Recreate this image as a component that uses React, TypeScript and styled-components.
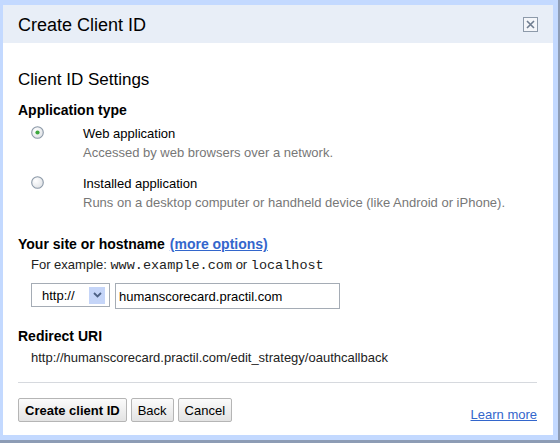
import React from "react";
import styled, { createGlobalStyle } from "styled-components";

const GlobalStyle = createGlobalStyle`
  html, body {
    margin: 0;
    padding: 0;
    background: #ffffff;
  }
  body {
    font-family: "Liberation Sans", Arial, sans-serif;
    color: #000;
  }
`;

const Frame = styled.div`
  width: 560px;
  height: 443px;
  box-sizing: border-box;
  background: #c3d9ff;
  padding: 5px 5px 5px 3px;
  border-right: 2px solid #8d9cb5;
  border-bottom: 3px solid #8d9cb5;
  display: flex;
  flex-direction: column;
`;

const Header = styled.div`
  height: 38px;
  flex: none;
  box-sizing: border-box;
  background: #e8eef7;
  padding: 0 15px;
  display: flex;
  justify-content: space-between;
  align-items: flex-start;
`;

const Title = styled.h1`
  margin: 10px 0 0;
  font-size: 18px;
  line-height: 21px;
  font-weight: normal;
`;

const CloseBox = styled.button`
  margin-top: 12px;
  width: 15px;
  height: 15px;
  padding: 0;
  border: 1px solid #8d9aaa;
  background: #f4f6fa;
  display: flex;
  align-items: center;
  justify-content: center;
  cursor: pointer;
`;

const Body = styled.div`
  flex: 1;
  background: #ffffff;
  padding: 0 16px 0 15px;
  display: flex;
  flex-direction: column;
`;

const SectionTitle = styled.h2`
  margin: 27px 0 0;
  font-size: 17px;
  line-height: 19px;
  font-weight: normal;
`;

const Label = styled.div<{ $gap: number }>`
  margin-top: ${(p) => p.$gap}px;
  font-size: 14px;
  line-height: 16px;
  font-weight: bold;
`;

const MoreLink = styled.a`
  color: #3366cc;
  text-decoration: underline;
  margin-left: 5px;
  cursor: pointer;
`;

const OptionRow = styled.label<{ $gap: number }>`
  margin-top: ${(p) => p.$gap}px;
  padding-left: 13px;
  display: grid;
  grid-template-columns: 13px 1fr;
  column-gap: 39px;
  font-size: 13px;
  line-height: 19px;
`;

const RadioMark = styled.span`
  margin-top: 1px;
  width: 13px;
  height: 13px;
  display: block;
`;

const OptionName = styled.div`
  color: #000;
`;

const OptionDesc = styled.div`
  color: #777777;
`;

const Hint = styled.div<{ $gap: number }>`
  margin-top: ${(p) => p.$gap}px;
  padding-left: 13px;
  font-size: 13px;
  line-height: 19px;
  color: #222;
`;

const Mono = styled.code`
  font-family: "Liberation Mono", "Courier New", monospace;
  font-size: 13.5px;
`;

const HostRow = styled.div`
  margin-top: 8px;
  padding-left: 13px;
  display: flex;
  align-items: flex-start;
  gap: 5px;
`;

const SchemeSelect = styled.div`
  width: 79px;
  height: 24px;
  box-sizing: border-box;
  border: 1px solid #a5acb5;
  background: #fff;
  display: flex;
  align-items: center;
  justify-content: space-between;
  padding: 0 4px 0 10px;
  font-size: 13px;
`;

const DropButton = styled.span`
  width: 16px;
  height: 17px;
  background: #c5d5f8;
  display: flex;
  align-items: center;
  justify-content: center;
`;

const HostInput = styled.input`
  width: 225px;
  height: 26px;
  box-sizing: border-box;
  border: 1px solid #a5acb5;
  padding: 0 3px;
  font-family: "Liberation Sans", Arial, sans-serif;
  font-size: 13px;
  color: #000;
  outline: none;
`;

const Rule = styled.hr`
  margin: 15px 0 0;
  border: 0;
  border-top: 1px solid #d6d9de;
`;

const Footer = styled.div`
  margin-top: 15px;
  display: flex;
  align-items: flex-end;
  justify-content: space-between;
`;

const ButtonGroup = styled.div`
  display: flex;
  gap: 4px;
`;

const Button = styled.button<{ $primary?: boolean }>`
  height: 24px;
  padding: 0 6px;
  border: 1px solid #b5b5b5;
  border-radius: 2px;
  background: linear-gradient(#fbfbfb, #e3e3e3);
  font-family: "Liberation Sans", Arial, sans-serif;
  font-size: 13px;
  font-weight: ${(p) => (p.$primary ? "bold" : "normal")};
  color: #000;
  cursor: pointer;
`;

const LearnMore = styled.a`
  font-size: 13px;
  line-height: 16px;
  color: #3366cc;
  text-decoration: underline;
  margin-bottom: -1px;
  cursor: pointer;
`;

const Radio = ({ checked }: { checked?: boolean }) => (
  <RadioMark>
    <svg width="13" height="13" viewBox="0 0 13 13">
      <defs>
        <radialGradient id="rg" cx="0.35" cy="0.35" r="0.8">
          <stop offset="0" stopColor="#ffffff" />
          <stop offset="1" stopColor="#dcdfe3" />
        </radialGradient>
      </defs>
      <circle cx="6.5" cy="6.5" r="5.8" fill="url(#rg)" stroke="#8c99a8" strokeWidth="1.1" />
      {checked && <circle cx="6.5" cy="6.5" r="2.1" fill="#3ea83e" />}
    </svg>
  </RadioMark>
);

const App = () => {
  return (
    <>
      <GlobalStyle />
      <Frame>
        <Header>
          <Title>Create Client ID</Title>
          <CloseBox aria-label="Close">
            <svg width="9" height="9" viewBox="0 0 9 9">
              <path d="M1 1L8 8M8 1L1 8" stroke="#6f7d90" strokeWidth="1.6" />
            </svg>
          </CloseBox>
        </Header>
        <Body>
          <SectionTitle>Client ID Settings</SectionTitle>
          <Label $gap={13}>Application type</Label>
          <OptionRow $gap={6}>
            <Radio checked />
            <div>
              <OptionName>Web application</OptionName>
              <OptionDesc>Accessed by web browsers over a network.</OptionDesc>
            </div>
          </OptionRow>
          <OptionRow $gap={12}>
            <Radio />
            <div>
              <OptionName>Installed application</OptionName>
              <OptionDesc>Runs on a desktop computer or handheld device (like Android or iPhone).</OptionDesc>
            </div>
          </OptionRow>
          <Label $gap={24}>
            Your site or hostname<MoreLink>(more options)</MoreLink>
          </Label>
          <Hint $gap={3}>
            For example: <Mono>www.example.com</Mono> or <Mono>localhost</Mono>
          </Hint>
          <HostRow>
            <SchemeSelect>
              <span>http://</span>
              <DropButton>
                <svg width="9" height="6" viewBox="0 0 9 6">
                  <path d="M1 1L4.5 4.5L8 1" fill="none" stroke="#4d6185" strokeWidth="1.8" />
                </svg>
              </DropButton>
            </SchemeSelect>
            <HostInput defaultValue="humanscorecard.practil.com" />
          </HostRow>
          <Label $gap={19}>Redirect URI</Label>
          <Hint $gap={4}>http://humanscorecard.practil.com/edit_strategy/oauthcallback</Hint>
          <Rule />
          <Footer>
            <ButtonGroup>
              <Button $primary>Create client ID</Button>
              <Button>Back</Button>
              <Button>Cancel</Button>
            </ButtonGroup>
            <LearnMore>Learn more</LearnMore>
          </Footer>
        </Body>
      </Frame>
    </>
  );
};

export default App;
